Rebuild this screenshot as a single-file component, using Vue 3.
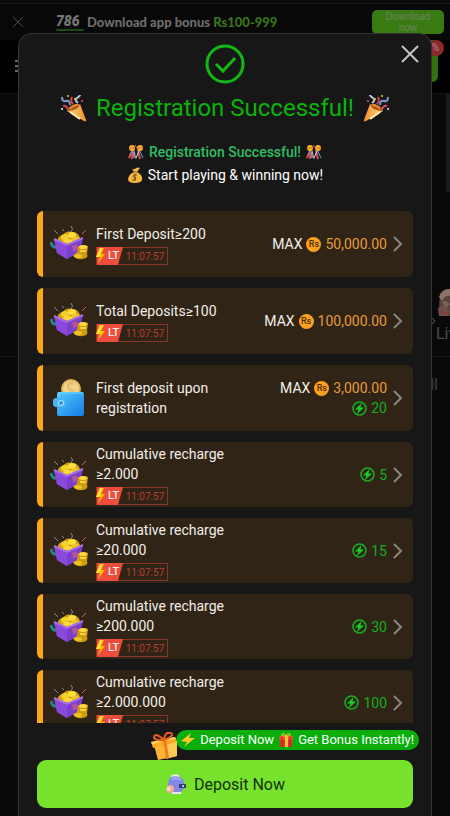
<template>
  <div class="page">
    <div class="app-banner">
      <button class="icon-btn banner-close" aria-label="Close banner">
        <svg width="12" height="12" viewBox="0 0 12 12"><path d="M1 1l10 10M11 1L1 11" /></svg>
      </button>
      <span class="logo">786</span>
      <span class="banner-text">Download app bonus <b>Rs100-999</b></span>
      <button class="download-btn">Download now</button>
    </div>
    <header class="topbar">
      <button class="icon-btn dots" aria-label="Menu"><i></i><i></i><i></i></button>
      <div class="top-action"><span class="percent">%</span></div>
    </header>
    <main class="lobby">
      <div class="promo"></div>
      <nav class="cats">
        <svg class="next" width="6" height="8" viewBox="0 0 6 8"><path d="M1 0l4 4-4 4" /></svg>
        <a href="#" class="cat">
          <svg width="24" height="30" viewBox="0 0 24 30">
            <path d="M4 10Q3 2 12 1Q22 0 24 10V28H8Q1 22 4 10Z" fill="#57453d" />
            <path d="M3 9Q6 1 14 1L22 4L16 8Q8 7 6 13Z" fill="#8a7468" />
            <path d="M6 14Q10 11 14 16L10 20Z" fill="#7d6358" />
            <path d="M2 20L8 17L14 24L11 28H3Z" fill="#6a5048" />
            <path d="M4 25q5-3 8 3" stroke="#8c3a3a" stroke-width="2" fill="none" />
          </svg>
          <span>Liv</span>
        </a>
      </nav>
      <div class="all">All</div>
    </main>

    <div class="overlay">
      <section class="modal" role="dialog" aria-labelledby="title">
        <button class="icon-btn modal-close" aria-label="Close">
          <svg width="18" height="18" viewBox="0 0 18 18"><path d="M1 1l16 16M17 1L1 17" /></svg>
        </button>
        <svg class="check" width="40" height="40" viewBox="0 0 40 40">
          <circle cx="20" cy="20" r="18" />
          <path d="M11 20l7 7 12-13" />
        </svg>
        <h1 id="title">
          <svg class="popper" viewBox="0 0 28 28"><use href="#popper" /></svg>
          <span>Registration Successful!</span>
          <svg class="popper flip" viewBox="0 0 28 28"><use href="#popper" /></svg>
        </h1>
        <p class="sub green">
          <svg class="emoji" viewBox="0 0 16 16"><use href="#balls" /></svg>
          Registration Successful!
          <svg class="emoji" viewBox="0 0 16 16"><use href="#balls" /></svg>
        </p>
        <p class="sub">
          <svg class="emoji" viewBox="0 0 16 16"><use href="#bag" /></svg>
          Start playing &amp; winning now!
        </p>

        <ul class="list">
          <li v-for="t in tasks" :key="t.title">
            <button class="card" :class="{ tall: t.tall }">
              <svg class="pic" viewBox="0 0 40 40"><use :href="t.wallet ? '#wallet' : '#treasure'" /></svg>
              <span class="info">
                <span class="name">{{ t.title }}</span>
                <span v-if="!t.wallet" class="timer">
                  <svg width="27" height="18" viewBox="0 0 27 18">
                    <path d="M1 0H27L22 18H1Z" fill="#ee4c3d" />
                    <path d="M4 1L0 10H4L2 16L9 7H5L8 1Z" fill="#ffc400" />
                    <path d="M4 1L0 10H3L7 1Z" fill="#ffe02f" />
                  </svg>
                  <b>LT</b>
                  <span class="time">{{ time }}</span>
                </span>
              </span>
              <span class="reward">
                <span v-if="t.max" class="line">
                  MAX
                  <i class="coin">Rs</i>
                  <span class="amount">{{ t.max }}</span>
                </span>
                <span v-if="t.points" class="line points">
                  <svg width="15" height="15" viewBox="0 0 30 30">
                    <circle cx="15" cy="15" r="13" />
                    <path d="M19 4L6 17H13L10 26L24 13H17Z" />
                  </svg>
                  {{ t.points }}
                </span>
              </span>
              <svg class="arrow" width="10" height="16" viewBox="0 0 10 16"><path d="M1 1l7 7-7 7" /></svg>
            </button>
          </li>
        </ul>

        <footer class="foot">
          <div class="tip">
            <svg class="gift" viewBox="0 0 28 28"><use href="#gift" /></svg>
            <svg class="emoji" viewBox="0 0 16 16"><path d="M11 1L1 9l6 1L4 15 15 6 9 6Z" fill="#ffc42e" /></svg>
            Deposit Now
            <svg class="emoji" viewBox="0 0 16 16"><use href="#redgift" /></svg>
            Get Bonus Instantly!
          </div>
          <button class="deposit">
            <svg width="22" height="22" viewBox="0 0 22 22">
              <path d="M6 4Q6 1 9 2Q11 0 13 2Q15 2 14 5Z" fill="#eeecff" />
              <path d="M6 4Q13 2 18 6L20 13Q18 20 11 20Q2 20 3 12Q3 7 6 4Z" fill="#8487e6" />
              <path d="M7 6Q12 4 16 7" stroke="#a5a8fa" stroke-width="2" fill="none" />
              <rect x="14" y="11" width="7" height="4" rx="1" fill="#33366e" />
              <circle cx="18" cy="13" r="1" fill="#dfe" />
              <circle cx="5" cy="16" r="4" fill="#f3a98e" />
              <circle cx="4" cy="16" r="2" fill="#ffe0ce" />
              <path d="M7 20h9" stroke="#e6e4ff" stroke-width="2" />
            </svg>
            Deposit Now
          </button>
        </footer>
      </section>
    </div>

    <svg class="defs" width="0" height="0" aria-hidden="true">
      <defs>
        <linearGradient id="blue" x1="0" y1="0" x2="1" y2="1">
          <stop offset="0" stop-color="#55cbff" />
          <stop offset="1" stop-color="#147be6" />
        </linearGradient>
        <linearGradient id="cone" x1="0" y1="0" x2="1" y2="0">
          <stop offset="0" stop-color="#ffd873" />
          <stop offset="1" stop-color="#ef9130" />
        </linearGradient>
      </defs>
      <symbol id="popper" viewBox="0 0 28 28">
        <path d="M7 17Q9 10 20 10L26 26Q27 28 24 27Z" fill="url(#cone)" />
        <path d="M10 18L20 25" stroke="#fff0bd" stroke-width="2" />
        <path d="M7 17Q8 10 20 10Q18 17 7 17Z" fill="#a5521d" />
        <path d="M10 15Q13 11 18 11" stroke="#e98a35" stroke-width="2" fill="none" />
        <path d="M2 3q0 5 4 4t4 4" stroke="#7b9ac8" stroke-width="2" fill="none" />
        <path d="M18 9q-4-3-1-5t3-3" stroke="#b9c6dd" stroke-width="2" fill="none" />
        <path d="M13 10q-3-3-1-7M3 12q3-1 5 3" stroke="#d64458" stroke-width="2" fill="none" />
        <circle cx="8" cy="2" r="1" fill="#ffce35" />
        <circle cx="15" cy="5" r="1" fill="#ffce35" />
        <circle cx="22" cy="7" r="1" fill="#ec5368" />
        <circle cx="2" cy="15" r="1" fill="#e7ecf5" />
      </symbol>
      <symbol id="balls" viewBox="0 0 16 16">
        <path d="M5 5L1 14M5 6L4 15M10 6L12 15" stroke="#e24c4c" stroke-width="2" />
        <path d="M6 6L8 15M11 5L15 14M4 7L2 11" stroke="#4ba5e0" stroke-width="1" />
        <path d="M11 7L8 14M6 8L6 14" stroke="#e8cfe0" stroke-width="1" />
        <circle cx="4" cy="4" r="3" fill="#f7b52c" />
        <circle cx="12" cy="4" r="3" fill="#f7b52c" />
        <path d="M1 4h6M9 4h6" stroke="#d66e21" stroke-width="1" />
        <path d="M7 1l2 3" stroke="#ed5664" stroke-width="1" />
      </symbol>
      <symbol id="bag" viewBox="0 0 16 16">
        <path d="M7 5L5 2Q8 3 9 1Q12 0 13 1L10 5Q16 8 15 13Q14 16 8 16Q1 16 1 12Q2 7 7 5Z" fill="#f5b93b" />
        <path d="M6 5h5" stroke="#8c5a21" stroke-width="1" />
        <path d="M10 8Q6 7 6 9T9 11Q9 14 5 13M8 7v7" stroke="#7b4b16" stroke-width="1" fill="none" />
      </symbol>
      <symbol id="treasure" viewBox="0 0 40 40">
        <path d="M21 8q3-3 0-6M8 10L4 6M14 7l-2-2" stroke="#8f8290" stroke-width="1" fill="none" />
        <path d="M36 6l-4 4" stroke="#c0607a" stroke-width="1" />
        <path d="M1 18q1 6 6 5l2-2" stroke="#23868a" stroke-width="3" fill="none" />
        <path d="M8 17Q7 12 13 11Q16 6 22 8Q29 8 30 15L26 20L17 22Z" fill="#d3a012" />
        <ellipse cx="15" cy="13" rx="4" ry="3" fill="#f2cf2f" />
        <ellipse cx="22" cy="11" rx="4" ry="3" fill="#ffdf3c" />
        <ellipse cx="26" cy="15" rx="4" ry="2" fill="#f0c425" />
        <ellipse cx="18" cy="17" rx="5" ry="2" fill="#fbd83c" />
        <path d="M4 15L17 21L33 14L30 28L17 35L7 29Z" fill="#7a3fcb" />
        <path d="M4 15L17 21V35L7 29Z" fill="#8a49dc" />
        <path d="M4 15L17 21L33 14" stroke="#a56ee8" stroke-width="2" fill="none" />
        <path d="M26 19l1 3 4 0-3 2 1 3-3-1-3 2 0-4-2-2 4-1Z" fill="#b6549c" />
        <path d="M28 23Q32 20 38 22L37 30Q39 34 33 35Q25 36 23 31Q28 30 28 23Z" fill="#cf9b10" />
        <ellipse cx="33" cy="23" rx="4" ry="2" fill="#fbd83c" />
        <ellipse cx="28" cy="32" rx="4" ry="2" fill="#efc22a" />
        <path d="M30 27h6" stroke="#f5d03a" stroke-width="2" />
      </symbol>
      <symbol id="wallet" viewBox="0 0 40 40">
        <circle cx="21" cy="11" r="10" fill="#dfb55a" />
        <circle cx="21" cy="11" r="8" fill="#f0d48c" />
        <path d="M24 6q-6-2-6 2t6 5" stroke="#e0bb68" stroke-width="2" fill="none" />
        <rect x="7" y="14" width="27" height="24" rx="2" fill="url(#blue)" />
        <path d="M8 15h25" stroke="#78d8ff" stroke-width="1" />
        <rect x="3" y="20" width="13" height="9" rx="3" fill="#48b5f6" />
        <circle cx="11" cy="25" r="3" fill="#b8e9ff" />
        <circle cx="11" cy="25" r="2" fill="#2a92e6" />
      </symbol>
      <symbol id="gift" viewBox="0 0 28 28">
        <path d="M4 13L25 9L27 24L8 28Z" fill="#ffb433" />
        <path d="M14 13L27 9L27 24L16 27Z" fill="#ffc956" />
        <path d="M1 10L25 5L27 10L3 16Z" fill="#ffa824" />
        <path d="M1 10L25 5L26 7L2 12Z" fill="#ffd46c" />
        <path d="M13 8L16 7L19 26L16 27Z" fill="#ed7b1f" />
        <path d="M14 8Q4 9 4 5Q5 0 14 8Q15-1 21 1Q25 4 14 8" stroke="#e9601c" stroke-width="2" fill="none" />
      </symbol>
      <symbol id="redgift" viewBox="0 0 16 16">
        <rect x="2" y="6" width="12" height="9" fill="#df3325" />
        <rect x="1" y="4" width="14" height="4" rx="1" fill="#f04c33" />
        <path d="M4 5v10M12 5v10" stroke="#b72219" stroke-width="1" />
        <rect x="7" y="4" width="3" height="11" fill="#ffc23a" />
        <path d="M8 4Q2 4 4 2Q6 0 8 4Q10 0 12 2Q14 4 8 4" stroke="#ffc23a" stroke-width="1" fill="none" />
      </symbol>
    </svg>
  </div>
</template>

<script setup>
import { ref } from 'vue'

const time = ref('11:07:57')

const tasks = ref([
  { title: 'First Deposit≥200', max: '50,000.00' },
  { title: 'Total Deposits≥100', max: '100,000.00' },
  { title: 'First deposit upon registration', max: '3,000.00', points: 20, wallet: true },
  { title: 'Cumulative recharge ≥2.000', points: 5, tall: true },
  { title: 'Cumulative recharge ≥20.000', points: 15, tall: true },
  { title: 'Cumulative recharge ≥200.000', points: 30, tall: true },
  { title: 'Cumulative recharge ≥2.000.000', points: 100, tall: true }
])
</script>

<style>
body {
  margin: 0;
  background: #090909;
}
</style>

<style scoped>
.page {
  min-height: 100vh;
  background: #090909;
  font-family: Roboto, sans-serif;
  color: #fff;
  overflow: hidden;
}
button {
  font-family: inherit;
  border: none;
  padding: 0;
  cursor: pointer;
}
.icon-btn {
  background: none;
  display: flex;
}
.defs {
  position: absolute;
}

/* page behind the dialog */
.app-banner {
  display: flex;
  align-items: center;
  height: 36px;
  margin-top: 3px;
  padding: 0 6px 0 12px;
  border-top: 1px solid #161616;
  background: #080808;
}
.banner-close svg {
  stroke: #4a4a4a;
  stroke-width: 1;
}
.logo {
  margin-left: 32px;
  width: 28px;
  font-size: 14px;
  font-weight: 900;
  font-style: italic;
  color: #777;
  border-bottom: 2px solid #174b17;
}
.banner-text {
  flex: 1;
  margin-left: 3px;
  font-family: Lato, sans-serif;
  font-size: 13px;
  font-weight: 900;
  color: #6c6c6c;
  white-space: nowrap;
}
.banner-text b {
  color: #377417;
}
.download-btn {
  width: 72px;
  height: 24px;
  padding: 0 12px;
  border-radius: 5px;
  background: #397a12;
  color: #69865a;
  font-size: 10px;
  line-height: 11px;
}
.topbar {
  display: flex;
  justify-content: space-between;
  height: 53px;
  padding: 0 12px 0 15px;
  background: #000;
  border-bottom: 1px solid #161616;
}
.dots {
  flex-direction: column;
  gap: 3px;
  padding-top: 20px;
}
.dots i {
  width: 3px;
  height: 2px;
  background: #666;
}
.top-action {
  position: relative;
  width: 60px;
  height: 42px;
  border-radius: 6px;
  background: #34700f;
}
.percent {
  position: absolute;
  right: -6px;
  top: 0;
  padding: 0 5px;
  border-radius: 8px;
  background: #8a2a2a;
  color: #b58d8d;
  font-size: 10px;
  line-height: 16px;
}
.promo {
  height: 98px;
  margin: 0 0 90px 446px;
  background: #1a1a1a;
}
.cats {
  display: flex;
  justify-content: flex-end;
  height: 74px;
  border-bottom: 1px solid #161616;
}
.next {
  margin-top: 35px;
  fill: none;
  stroke: #5c5c5c;
}
.cat {
  display: flex;
  flex-direction: column;
  width: 14px;
  gap: 6px;
  padding-top: 6px;
  color: #4c4c4c;
  font-size: 16px;
  text-decoration: none;
}
.all {
  padding: 18px 12px;
  text-align: right;
  font-size: 16px;
  color: #3f3f3f;
}

/* dialog */
.overlay {
  position: fixed;
  inset: 33px 18px 0;
  display: flex;
}
.modal {
  flex: 1;
  min-width: 0;
  display: flex;
  flex-direction: column;
  align-items: center;
  box-sizing: border-box;
  padding: 10px 18px 8px;
  border: 1px solid #333;
  border-bottom: none;
  border-radius: 14px 14px 0 0;
  background: #171717;
}
.modal-close {
  position: absolute;
  top: 12px;
  right: 13px;
}
.modal-close svg {
  stroke: #c4c4c4;
  stroke-width: 2;
}
.check {
  flex: none;
  fill: none;
  stroke: #13b913;
  stroke-width: 3;
}
h1 {
  display: flex;
  align-items: center;
  gap: 8px;
  margin: 8px 0 18px;
  font-size: 24px;
  line-height: 32px;
  font-weight: 400;
  color: #0ab30a;
  white-space: nowrap;
}
.popper {
  width: 28px;
  height: 28px;
}
.flip {
  transform: scaleX(-1);
}
.sub {
  display: flex;
  align-items: center;
  gap: 5px;
  margin: 0;
  padding-bottom: 3px;
  font-size: 14px;
  line-height: 20px;
}
.green {
  color: #2ebd64;
  font-weight: 500;
}
.emoji {
  flex: none;
  width: 16px;
  height: 16px;
}
.list {
  flex: 1;
  min-height: 0;
  align-self: stretch;
  display: flex;
  flex-direction: column;
  gap: 11px;
  margin: 23px 0 0;
  padding: 0;
  list-style: none;
  overflow-y: auto;
  scrollbar-width: none;
}
.card {
  display: flex;
  align-items: center;
  box-sizing: border-box;
  width: 100%;
  min-height: 66px;
  padding: 0 10px 0 7px;
  border-left: 6px solid #fda81a;
  border-radius: 6px;
  background: #2f2416;
  color: #f2efe9;
  font-size: 14px;
  line-height: 20px;
  text-align: left;
}
.card.tall {
  min-height: 65px;
}
.pic {
  flex: none;
  width: 40px;
  height: 40px;
}
.info {
  flex: 1;
  display: flex;
  flex-direction: column;
  align-items: flex-start;
  gap: 3px;
  margin-left: 6px;
}
.name {
  max-width: 144px;
}
.timer {
  position: relative;
  display: flex;
  box-sizing: border-box;
  width: 72px;
  height: 18px;
  border: 1px solid #8b3429;
}
.timer svg {
  margin: -1px 0 0 -1px;
}
.timer b {
  position: absolute;
  left: 11px;
  font-size: 11px;
  font-weight: 500;
  line-height: 15px;
}
.time {
  flex: 1;
  font-size: 10px;
  line-height: 17px;
  text-align: center;
  color: #b5402f;
}
.reward {
  display: flex;
  flex-direction: column;
  align-items: flex-end;
}
.line {
  display: flex;
  align-items: center;
  gap: 4px;
}
.coin {
  width: 15px;
  height: 15px;
  border-radius: 50%;
  background: #fda01a;
  color: #4a2e08;
  font-size: 9px;
  font-style: normal;
  font-weight: 500;
  line-height: 15px;
  text-align: center;
}
.amount {
  color: #e79a3c;
}
.points {
  color: #17ad22;
}
.points circle {
  fill: none;
  stroke: #17ad22;
  stroke-width: 3;
}
.points path {
  fill: #10d020;
}
.arrow {
  margin-left: 6px;
  fill: none;
  stroke: #8d867d;
  stroke-width: 2;
}
.foot {
  align-self: stretch;
  display: flex;
  flex-direction: column;
  align-items: flex-end;
  gap: 10px;
  padding-top: 7px;
}
.tip {
  position: relative;
  display: flex;
  align-items: center;
  gap: 4px;
  height: 20px;
  margin-right: -6px;
  padding: 0 5px 0 4px;
  border-radius: 10px;
  background: #08af0c;
  font-size: 13px;
  line-height: 20px;
  white-space: nowrap;
}
.gift {
  position: absolute;
  left: -26px;
  top: 2px;
  width: 28px;
  height: 28px;
}
.deposit {
  display: flex;
  align-items: center;
  justify-content: center;
  gap: 7px;
  width: 100%;
  height: 48px;
  border-radius: 9px;
  background: #76e22c;
  color: #14300a;
  font-size: 16px;
}
</style>
